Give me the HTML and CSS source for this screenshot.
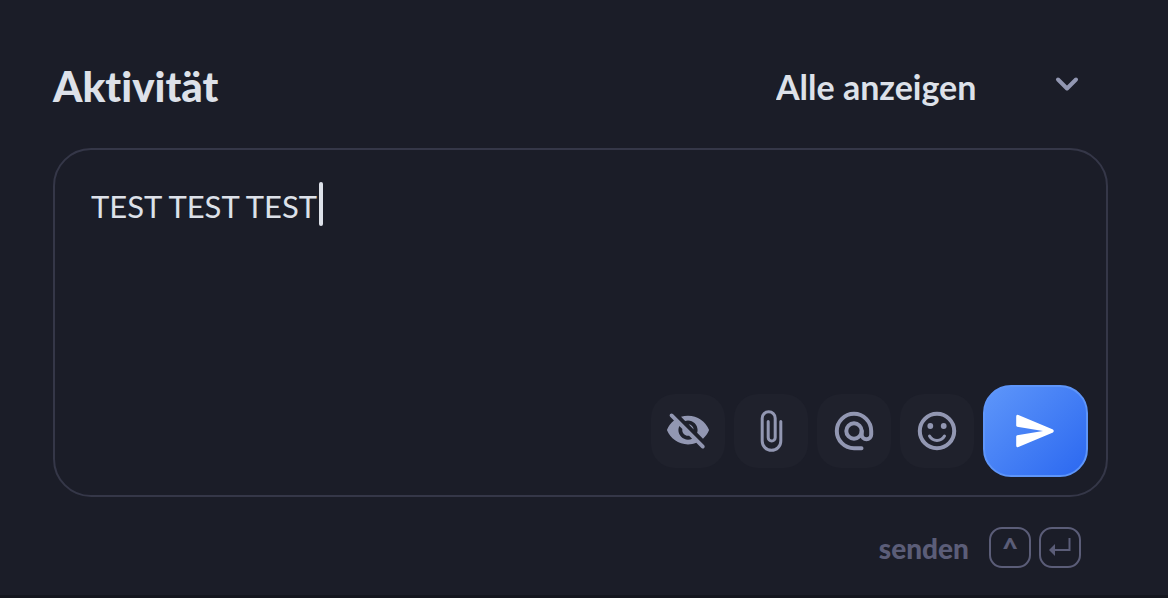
FILE: index.html
```html
<!DOCTYPE html>
<html lang="de">
  <head>
    <meta charset="UTF-8" />
    <meta name="viewport" content="width=device-width, initial-scale=1" />
    <title>Aktivität</title>
    <link rel="stylesheet" href="styles.css">
  </head>
  <body>
    <main class="activity">
      <header class="activity-header">
        <h1>Aktivität</h1>
        <div class="filter">
          <select class="filter-select" aria-label="Aktivität filtern">
            <option>Alle anzeigen</option>
          </select>
          <svg class="filter-arrow" viewBox="0 0 24 16" aria-hidden="true">
            <path d="M3 3.5l9 9 9-9" />
          </svg>
        </div>
      </header>

      <form class="composer">
        <div class="field">
          <textarea class="message" aria-label="Kommentar" spellcheck="false">TEST TEST TEST</textarea>
          <span class="caret"></span>
        </div>
        <div class="toolbar">
          <button class="tool" type="button" aria-label="Intern">
            <svg class="icon" viewBox="0 0 24 24">
              <path class="solid" d="M12 6.5c2.76 0 5 2.24 5 5 0 .51-.1 1-.24 1.46l3.06 3.06c1.39-1.23 2.49-2.77 3.18-4.53C21.27 7.11 17 4 12 4c-1.27 0-2.49.2-3.64.57l2.17 2.17c.47-.14.96-.24 1.47-.24zM2.71 3.16c-.39.39-.39 1.02 0 1.41l1.97 1.97C3.06 7.83 1.77 9.53 1 11.5 2.73 15.89 7 19 12 19c1.52 0 2.97-.3 4.31-.82l2.72 2.72c.39.39 1.02.39 1.41 0 .39-.39.39-1.02 0-1.41L4.13 3.16c-.39-.39-1.03-.39-1.42 0zM12 16.5c-2.76 0-5-2.24-5-5 0-.77.18-1.5.49-2.14l1.57 1.57c-.03.18-.06.37-.06.57 0 1.66 1.34 3 3 3 .2 0 .38-.03.57-.07L14.14 16c-.65.32-1.37.5-2.14.5zm2.97-5.33c-.15-1.4-1.25-2.49-2.64-2.64l2.64 2.64z" />
            </svg>
          </button>
          <button class="tool" type="button" aria-label="Datei anhängen">
            <svg class="icon" viewBox="0 0 46 46">
              <path class="line thin" d="M32.8 13.4V33a9.3 9.3 0 0 1-18.6 0V10.2a6.5 6.5 0 0 1 13 0v19.3a3.5 3.5 0 0 1-7 0V13.4" />
            </svg>
          </button>
          <button class="tool" type="button" aria-label="Erwähnen">
            <svg class="icon" viewBox="0 0 46 46">
              <circle class="line" cx="23" cy="23" r="7.7" />
              <path class="line" d="M30.7 23v3.4a4.75 4.75 0 0 0 9.5 0V23A17.2 17.2 0 1 0 23 40.2h7.5" />
            </svg>
          </button>
          <button class="tool" type="button" aria-label="Emoji">
            <svg class="icon" viewBox="0 0 46 46">
              <circle class="line" cx="23" cy="23" r="17.2" />
              <circle class="solid" cx="16.3" cy="18" r="2.9" />
              <circle class="solid" cx="29.7" cy="18" r="2.9" />
              <path class="line thin" d="M15.5 28a8.6 8.6 0 0 0 15 0" />
            </svg>
          </button>
          <button class="send" type="submit" aria-label="Senden">
            <svg class="icon" viewBox="0 0 46 46">
              <path class="solid" d="M3.2 8.4q0-2.4 2.2-1.5L40 21.6q1.8 1.4 0 2.8L5.4 39.1q-2.2.9-2.2-1.5v-9.2q0-.9 1-1.1L30 23 4.2 18.7q-1-.2-1-1.1z" />
            </svg>
          </button>
        </div>
      </form>

      <footer class="shortcut">
        <span class="shortcut-label">senden</span>
        <kbd>^</kbd>
        <kbd>
          <svg class="enter" viewBox="0 0 24 24" aria-label="Enter">
            <path class="line" d="M21.5 2v12H6" />
            <path class="solid" d="M1 14l6-6v12z" />
          </svg>
        </kbd>
      </footer>
    </main>
  </body>
</html>
```
FILE: styles.css
```css
* {
  box-sizing: border-box;
}
body {
  margin: 0;
  background-color: #1b1d28;
  color: #dde1e9;
  font-family: Lato, "Open Sans", sans-serif;
  font-variant-ligatures: none;
}
.activity {
  min-height: 100vh;
  padding: 56px 60px 27px 53px;
  border-bottom: 3px solid #14161e;
}
.activity-header {
  display: flex;
  justify-content: space-between;
  align-items: center;
  height: 60px;
  margin-bottom: 32px;
}
h1 {
  margin: 0;
  font-size: 42px;
  font-weight: 900;
}
.filter {
  position: relative;
}
.filter-select {
  appearance: none;
  padding: 0 131px 0 0;
  border: 0;
  background: none;
  color: inherit;
  font-family: inherit;
  font-size: 34px;
  font-weight: 700;
  cursor: pointer;
}
.filter-arrow {
  position: absolute;
  top: 10px;
  right: 29px;
  width: 24px;
  height: 16px;
  fill: none;
  stroke: #9297b2;
  stroke-width: 4;
  stroke-linecap: round;
  stroke-linejoin: round;
  pointer-events: none;
}
.composer {
  padding: 32px 18px 18px 36px;
  border: 2px solid #353748;
  border-radius: 38px;
}
.field {
  position: relative;
  margin-bottom: 3px;
}
.message {
  display: block;
  width: 100%;
  height: 200px;
  padding: 0;
  border: 0;
  outline: 0;
  background: none;
  color: inherit;
  caret-color: transparent;
  font-family: inherit;
  font-size: 31px;
  line-height: 48px;
  resize: none;
}
.caret {
  position: absolute;
  top: 0;
  left: 228px;
  width: 4px;
  height: 44px;
  border-radius: 2px;
  background-color: #dde1e9;
}
.toolbar {
  display: flex;
  justify-content: flex-end;
  align-items: center;
  gap: 9px;
}
.tool,
.send {
  display: flex;
  justify-content: center;
  align-items: center;
  padding: 0;
  cursor: pointer;
}
.tool {
  width: 74px;
  height: 74px;
  border: 0;
  border-radius: 24px;
  background-color: #1f212c;
  color: #9297b2;
}
.send {
  width: 105px;
  height: 92px;
  border: 2px solid #5e95f9;
  border-radius: 28px;
  background: linear-gradient(135deg, #5f97fa, #2a67f0) border-box;
  color: #fff;
}
.icon {
  width: 46px;
  height: 46px;
}
.solid {
  fill: currentColor;
}
.line {
  fill: none;
  stroke: currentColor;
  stroke-width: 4;
  stroke-linecap: round;
}
.thin {
  stroke-width: 3;
}
.shortcut {
  display: flex;
  justify-content: flex-end;
  align-items: center;
  gap: 8px;
  margin-top: 30px;
  padding-right: 27px;
  color: #5b5d78;
}
.shortcut-label {
  margin-right: 12px;
  font-size: 28px;
  font-weight: 900;
}
kbd {
  display: flex;
  justify-content: center;
  align-items: center;
  width: 42px;
  height: 41px;
  border: 2px solid #5b5d78;
  border-radius: 13px;
  font-family: inherit;
  font-size: 28px;
  font-weight: 900;
}
.enter {
  width: 24px;
  height: 24px;
}
.enter .line {
  stroke-width: 2;
  stroke-linecap: butt;
}
```
